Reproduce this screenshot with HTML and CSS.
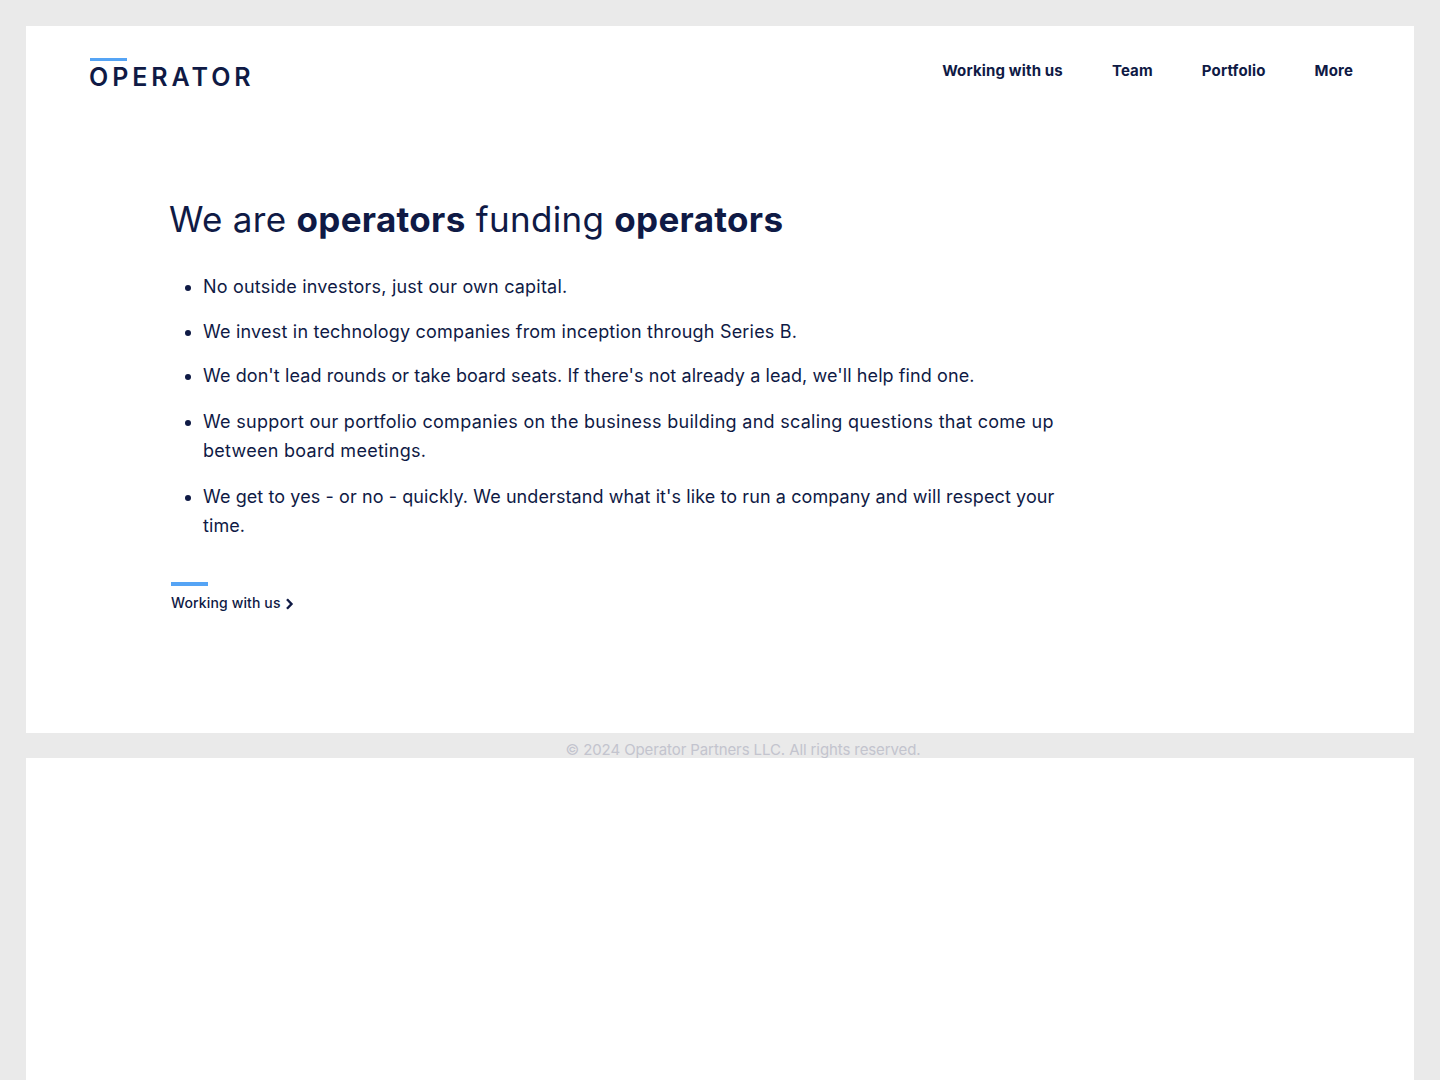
FILE: index.html
```html
<!DOCTYPE html>
<html lang="en">
    <head>
        <meta charset="utf-8">
        <meta name="viewport" content="width=device-width, initial-scale=1">
        <title>Operator Partners</title>

        <link rel="stylesheet" href="styles.css">
    </head>
    <body>
        <div class="frame">
            <div class="main">
                <div class="header">
                    <a class="logo" href="#"><span class="logo-bar"></span><span class="logo-text">OPERATOR</span></a>
                    <div class="nav">
                        <a href="#">Working with us</a>
                        <a href="#">Team</a>
                        <a href="#">Portfolio</a>
                        <a href="#">More</a>
                    </div>
                </div>

                <div class="content">
                    <h1>We are <b>operators</b> funding <b>operators</b></h1>
                    <ul>
                        <li>No outside investors, just our own capital.</li>
                        <li>We invest in technology companies from inception through Series B.</li>
                        <li class="tight">We don't lead rounds or take board seats. If there's not already a lead, we'll help find one.</li>
                        <li class="wide">We support our portfolio companies on the business building and scaling questions that come up between board meetings.</li>
                        <li class="tight">We get to yes - or no - quickly. We understand what it's like to run a company and will respect your time.</li>
                    </ul>
                    <a class="more" href="#">
                        <span class="more-bar"></span>
                        <span class="more-label">Working with us
                            <svg width="9" height="12" viewBox="0 0 9 12"><path d="M2 1.200 6.500 6 2 10.800" fill="none" stroke="#0f1a45" stroke-width="2.400"/></svg>
                        </span>
                    </a>
                </div>
            </div>

            <div class="footer">© 2024 Operator Partners LLC. All rights reserved.</div>

            <div class="lower"></div>
        </div>
    </body>
</html>
```

FILE: styles.css
```css
body {
    margin: 0;
    background-color: #eaeaea;
    color: #0f1a45;
    font-family: Inter, "Noto Sans", sans-serif;
}

a {
    color: inherit;
    text-decoration: none;
}

.frame {
    margin: 0 26px;
    padding-top: 26px;
}

.main {
    height: 707px;
    background-color: white;
    overflow: hidden;
}

.header {
    display: flex;
    justify-content: space-between;
    padding: 32px 61px 0 63px;
}

.logo {
    display: block;
    width: 170px;
}

.logo-bar {
    display: block;
    width: 37px;
    height: 3px;
    margin-left: 1px;
    background-color: #55a4f5;
}

.logo-text {
    display: block;
    margin-top: 4px;
    font-size: 25px;
    line-height: 25px;
    font-weight: 600;
    letter-spacing: 3.95px;
    white-space: nowrap;
}

.nav {
    display: flex;
    gap: 49px;
    height: 24px;
    margin-top: 1px;
    font-size: 15px;
    line-height: 24px;
    font-weight: 700;
    letter-spacing: 0.15px;
}

.content {
    margin: 106px 0 0 143px;
    width: 905px;
}

h1 {
    margin: 0;
    font-size: 35px;
    line-height: 46px;
    font-weight: 400;
    letter-spacing: 0.3px;
}

h1 b {
    font-weight: 700;
}

ul {
    margin: 30px 0 0;
    padding-left: 34px;
    font-size: 18px;
    line-height: 29px;
    letter-spacing: 0.2px;
}

li {
    margin-bottom: 16.15px;
}

li:nth-child(2) {
    margin-bottom: 15px;
}

li:nth-child(3) {
    margin-bottom: 17.3px;
}

li.tight {
    letter-spacing: 0.09px;
}

li.wide {
    letter-spacing: 0.28px;
}

.more {
    display: block;
    margin: 42px 0 0 2px;
    font-size: 14px;
    font-weight: 500;
    line-height: 20px;
    letter-spacing: 0.13px;
}

.more-bar {
    display: block;
    width: 37px;
    height: 4px;
    margin-bottom: 7px;
    background-color: #55a4f5;
}

.more-label svg {
    margin-left: 1px;
    vertical-align: -2px;
}

.footer {
    height: 25px;
    overflow: hidden;
    padding-left: 46px;
    text-align: center;
    font-size: 15px;
    line-height: 33px;
    letter-spacing: -0.1px;
    color: #c3c4ce;
}

.lower {
    height: 322px;
    background-color: white;
}
```
